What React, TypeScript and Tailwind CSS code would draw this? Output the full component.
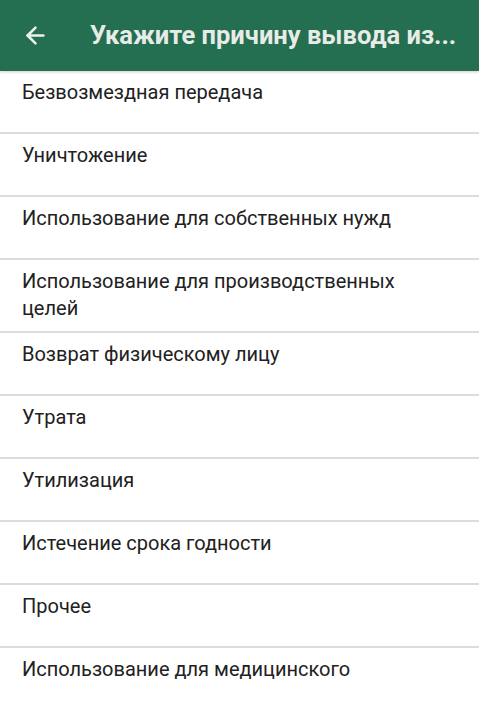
import { ArrowLeft } from 'lucide-react';

const reasons = [
  'Безвозмездная передача',
  'Уничтожение',
  'Использование для собственных нужд',
  'Использование для производственных целей',
  'Возврат физическому лицу',
  'Утрата',
  'Утилизация',
  'Истечение срока годности',
  'Прочее',
  'Использование для медицинского',
];

export default function App() {
  return (
    <div className="min-h-screen bg-white font-['Roboto',sans-serif]">
      {/* Toolbar */}
      <header className="relative z-10 flex h-[71px] items-center bg-[#236f4f] shadow-[0_1px_3px_rgba(0,0,0,0.2)]">
        <button className="ml-[21px] flex h-7 w-7 items-center justify-center text-[#eef0ee]">
          <ArrowLeft className="h-[27px] w-[27px]" strokeWidth={2.3} />
        </button>
        <h1 className="ml-[41px] mr-[18px] flex-1 whitespace-nowrap text-[25.5px] font-bold text-[#e9ebe9]">
          Укажите причину вывода из...
        </h1>
      </header>

      {/* List */}
      <ul>
        {reasons.map((r) => (
          <li
            key={r}
            className="min-h-[63px] border-b-2 border-[#dcdcdc] pb-[9px] pl-[22px] pr-[40px] pt-[8px] text-[20px] leading-[27px] text-[#212121]"
          >
            {r}
          </li>
        ))}
      </ul>
    </div>
  );
}
